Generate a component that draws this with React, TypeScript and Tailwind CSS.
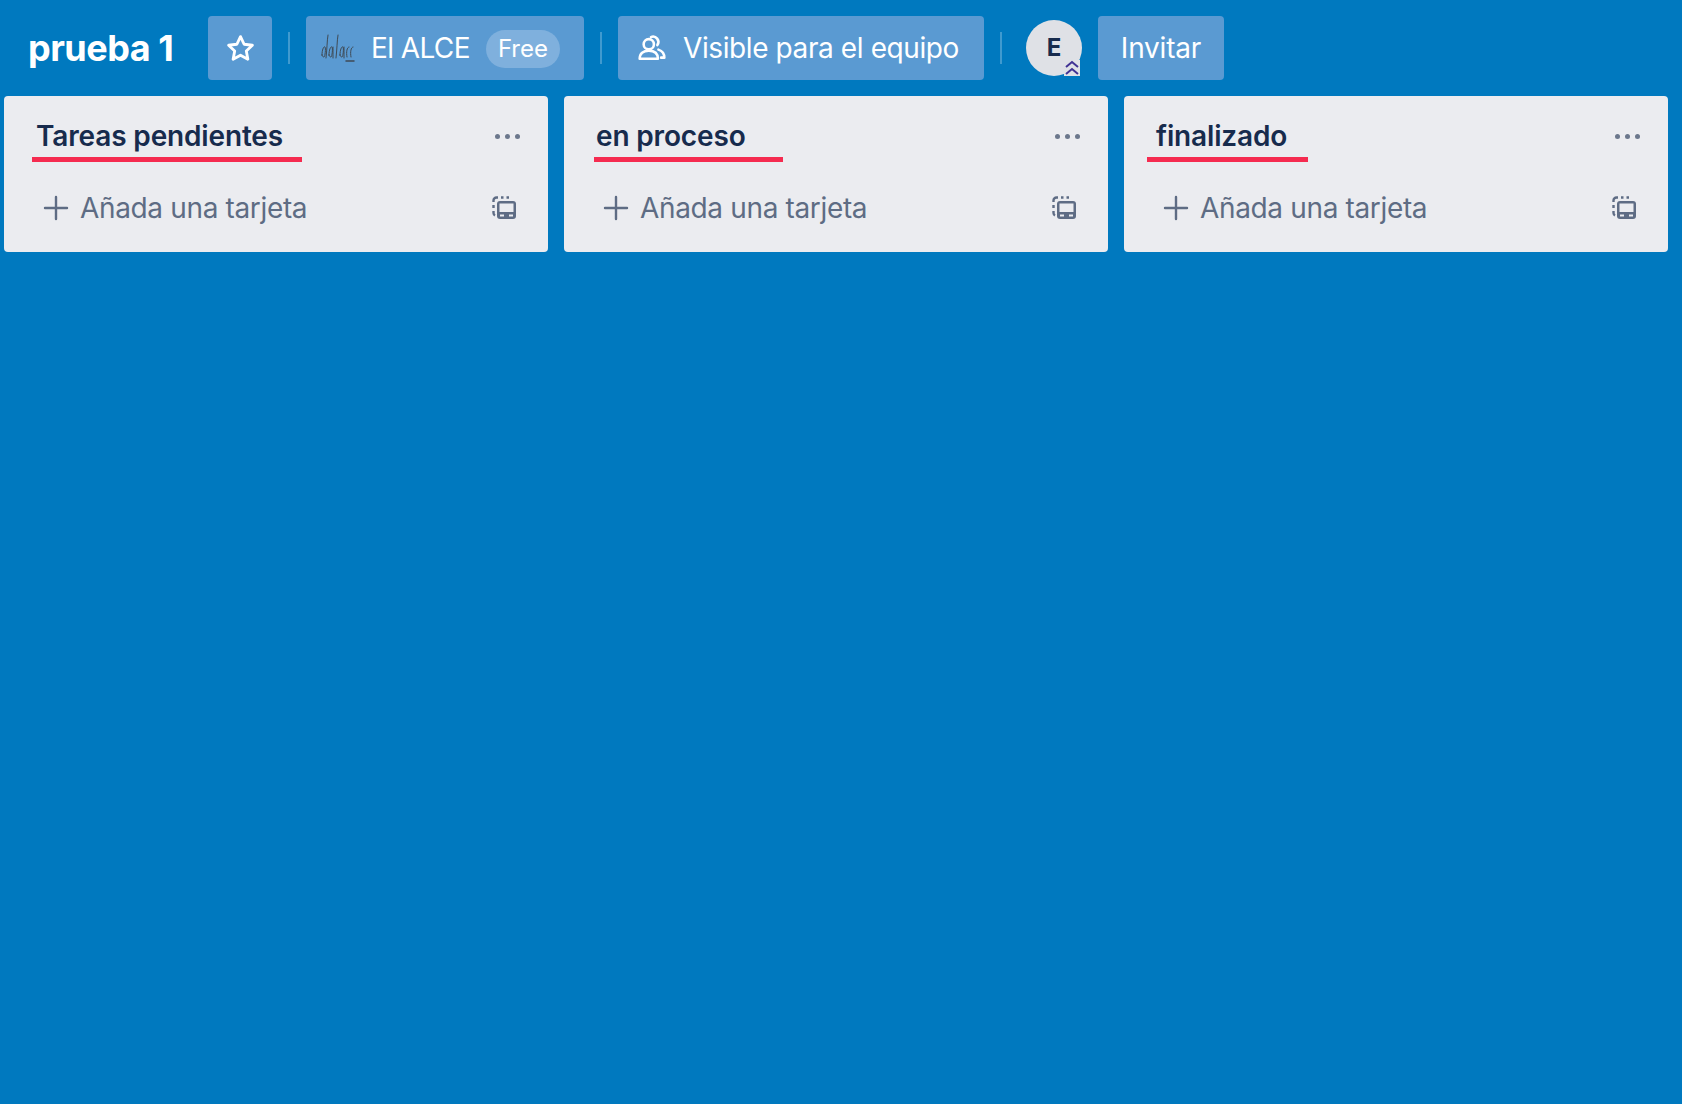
const lists = [
  { title: "Tareas pendientes", lineLeft: "-left-1", lineWidth: "w-[270px]" },
  { title: "en proceso", lineLeft: "-left-0.5", lineWidth: "w-[189px]" },
  { title: "finalizado", lineLeft: "-left-[9px]", lineWidth: "w-[161px]" },
]

const Separator = () => <div className="h-8 w-0.5 shrink-0 bg-white/25" />

const StarIcon = () => (
  <svg width="31" height="31" viewBox="0 0 24 24" fill="none" stroke="white" strokeWidth="2.200" strokeLinejoin="round">
    <path d="M12 2.800l2.800 5.900 6.400.8-4.700 4.400 1.200 6.400L12 17.200l-5.700 3.100 1.200-6.400-4.700-4.400 6.400-.8z" />
  </svg>
)

const TeamIcon = () => (
  <svg width="30" height="30" viewBox="0 0 28 28" fill="none" stroke="white" strokeWidth="2.400" strokeLinecap="round" strokeLinejoin="round">
    <circle cx="11" cy="10.500" r="4.800" />
    <path d="M2.500 24c0-5 3.400-7.500 8.500-7.500S19.500 19 19.500 24z" />
    <path d="M13 3.800a5 5 0 0 1 6 7.500" />
    <path d="M20 15.500c2.800.9 5.500 3.100 5.500 7.500h-3" />
  </svg>
)

const WorkspaceLogo = () => (
  <svg width="36" height="36" viewBox="0 0 36 36" fill="none" stroke="#3f4a55" strokeWidth="1" strokeLinecap="round">
    <path d="M2 25c0-6 2-9 3-8s0 10-1 10-2-1-2-2z" />
    <path d="M6 28c1-8 1-17 2-23" />
    <path d="M9 25c0-6 2-9 3-8s0 10-1 10-2-1-2-2z" />
    <path d="M13 28c0-5 0-9 0-11" />
    <path d="M16 28c1-8 1-17 2-23" />
    <path d="M20 25c0-6 2-9 3-8s0 10-1 10-2-1-2-2z" />
    <path d="M24 28c0-5 0-9 0-11" />
    <path d="M27 27c-1-5 0-10 2-10" />
    <path d="M31 27c-1-5 0-10 2-10" />
    <path d="M26 31h8" strokeWidth="1.500" />
  </svg>
)

const TemplateIcon = () => (
  <svg width="24" height="24" viewBox="0 0 24 24" fill="none">
    <path d="M1.500 6V4.500a3 3 0 0 1 3-3H6M1.500 9v3M1.500 15v2a3 3 0 0 0 1.500 2.500M9 1.500h2.500M14.500 1.500H17" stroke="#5E6C84" strokeWidth="2.400" />
    <rect x="5" y="5" width="19" height="18" rx="3" fill="#5E6C84" />
    <rect x="7.500" y="7.500" width="14" height="8.500" fill="#EBECF0" />
    <rect x="8" y="18.500" width="4" height="2" fill="#EBECF0" />
    <rect x="17" y="18.500" width="4" height="2" fill="#EBECF0" />
  </svg>
)

const PlusIcon = () => (
  <svg width="26" height="26" viewBox="0 0 26 26" stroke="#5E6C84" strokeWidth="2.400" strokeLinecap="round">
    <path d="M13 2v22M2 13h22" />
  </svg>
)

const App = () => {
  return (
    <div className="min-h-[1104px] bg-[#0079BF] font-['Inter',sans-serif]">
      <header className="flex h-[96px] items-start pt-4 pl-7">
        <h1 className="mt-3 w-[180px] shrink-0 text-[36px] leading-10 font-bold tracking-[-0.5px] text-white">prueba 1</h1>
        <button className="flex h-16 w-[64px] items-center justify-center rounded bg-[#5A9AD2]">
          <StarIcon />
        </button>
        <div className="flex h-16 items-center pl-[16px] pr-[16px]"><Separator /></div>
        <button className="flex h-16 w-[278px] items-center rounded bg-[#5A9AD2] pl-3.5 text-[28px] text-white">
          <WorkspaceLogo />
          <span className="ml-[15px] tracking-[-0.6px]">El ALCE</span>
          <span className="mt-0.5 ml-4 flex h-[38px] w-[74px] items-center justify-center rounded-full bg-[#7FB0DD] text-[24px]">Free</span>
        </button>
        <div className="flex h-16 items-center pl-4 pr-4"><Separator /></div>
        <button className="flex h-16 w-[366px] items-center rounded bg-[#5A9AD2] pl-[19px] text-[28px] text-white">
          <TeamIcon />
          <span className="ml-[16px] tracking-[-0.4px]">Visible para el equipo</span>
        </button>
        <div className="flex h-16 items-center pl-4 pr-[24px]"><Separator /></div>
        <div className="relative mt-1 flex h-14 w-14 items-center justify-center rounded-full bg-[#DFE1E6] text-[24px] font-bold text-[#172B4D]">
          E
          <svg className="absolute right-0.5 bottom-0 bg-[#DFE1E6]" width="16" height="16" viewBox="0 0 16 16" fill="none" stroke="#403294" strokeWidth="2">
            <path d="M2 7l6-5 6 5M2 14l6-5 6 5" />
          </svg>
        </div>
        <button className="ml-4 flex h-16 w-[126px] items-center justify-center rounded bg-[#5A9AD2] text-[28px] tracking-[-0.2px] text-white">Invitar</button>
      </header>
      <main className="flex items-start gap-4 pl-1">
        {lists.map((list) => (
          <section key={list.title} className="h-[156px] w-[544px] rounded bg-[#EBECF0] px-8 pt-[20px]">
            <div className="flex h-10 items-center justify-between">
              <h2 className="relative text-[28px] font-semibold tracking-[-0.15px] text-[#172B4D]">
                {list.title}
                <span className={`absolute top-[42px] h-[5px] bg-[#F52B50] ${list.lineLeft} ${list.lineWidth}`} />
              </h2>
              <div className="mr-[-4px] flex gap-[5px]">
                <span className="h-[5px] w-[5px] rounded-full bg-[#6B778C]" />
                <span className="h-[5px] w-[5px] rounded-full bg-[#6B778C]" />
                <span className="h-[5px] w-[5px] rounded-full bg-[#6B778C]" />
              </div>
            </div>
            <div className="mt-[32px] flex h-10 items-center justify-between pl-[7px]">
              <div className="flex items-center gap-[11px] text-[28px] tracking-[-0.35px] text-[#5E6C84]">
                <PlusIcon />
                Añada una tarjeta
              </div>
              <TemplateIcon />
            </div>
          </section>
        ))}
      </main>
    </div>
  )
}

export default App
